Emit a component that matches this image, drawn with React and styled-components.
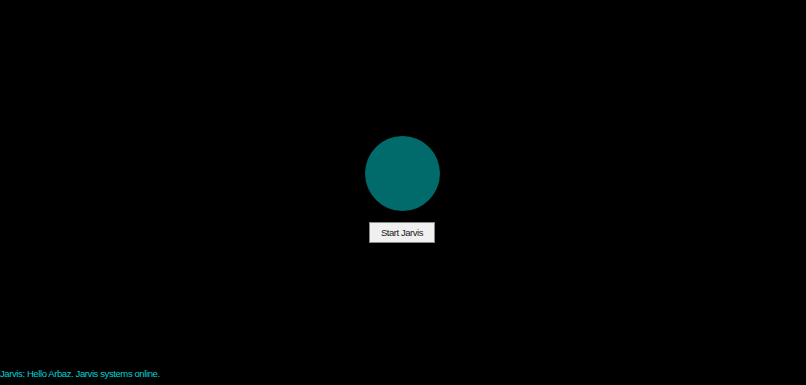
import React from 'react';
import styled, {createGlobalStyle} from 'styled-components';

const GlobalStyle = createGlobalStyle`
  html, body {
    margin: 0;
    padding: 0;
    background: #000;
    font-family: "Liberation Sans", Arial, sans-serif;
  }
`;

const Page = styled.div`
  height: 100vh;
  display: flex;
  flex-direction: column;
  background: #000;
`;

const Stage = styled.div`
  flex: 1;
  display: flex;
  flex-direction: column;
  align-items: center;
  justify-content: center;
  padding-top: 14px;
  padding-right: 2px;
`;

const Orb = styled.div`
  width: 75px;
  height: 75px;
  border-radius: 50%;
  background: #016a6a;
`;

const StartButton = styled.button`
  margin-top: 11px;
  height: 21px;
  padding: 0 11px;
  background: #f0f0f0;
  border: 1px solid #8a8a8a;
  color: #1a1a1a;
  font-family: "Liberation Sans", Arial, sans-serif;
  font-size: 9.5px;
  letter-spacing: -0.45px;
`;

const Log = styled.div`
  box-sizing: border-box;
  height: 20px;
  padding-top: 3px;
  color: #00d0d4;
  font-size: 9.5px;
  letter-spacing: -0.4px;
  line-height: 12px;
`;

const App = () =>
  <Page>
    <GlobalStyle />
    <Stage>
      <Orb />
      <StartButton>Start Jarvis</StartButton>
    </Stage>
    <Log>Jarvis: Hello Arbaz. Jarvis systems online.</Log>
  </Page>

export default App;
